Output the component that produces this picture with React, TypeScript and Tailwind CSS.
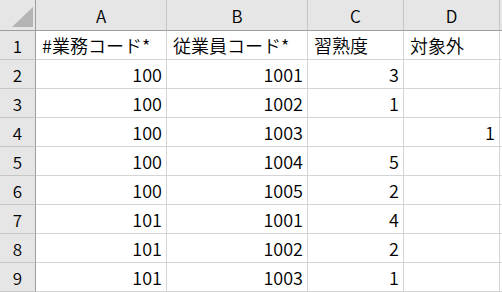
import React from 'react';

const rows: (string | number)[][] = [
  ['#業務コード*', '従業員コード*', '習熟度', '対象外'],
  [100, 1001, 3, ''],
  [100, 1002, 1, ''],
  [100, 1003, '', 1],
  [100, 1004, 5, ''],
  [100, 1005, 2, ''],
  [101, 1001, 4, ''],
  [101, 1002, 2, ''],
  [101, 1003, 1, ''],
];

const cols = ['A', 'B', 'C', 'D'];

export default function App() {
  return (
    <div
      className="w-[502px] h-[292px] overflow-hidden bg-white text-black text-[18px] font-[350]"
      style={{ fontFamily: '"Noto Sans CJK JP", "Noto Sans", sans-serif' }}
    >
      <div className="grid grid-cols-[36px_131px_141px_96px_96px_40px] grid-rows-[31px_repeat(9,29px)]">
        {/* column headers */}
        <div className="relative bg-[#e6e6e6] border-r border-b border-[#9e9e9e]">
          <svg className="absolute left-[12px] top-[7px]" width="21" height="20" viewBox="0 0 21 20">
            <polygon points="0,20 21,20 21,0" fill="#b4b4b4" />
          </svg>
        </div>
        {cols.map((c) => (
          <div
            key={c}
            className="bg-[#e6e6e6] border-r border-r-[#c6c6c6] border-b border-b-[#9e9e9e] flex items-center justify-center leading-none pt-[1px] text-[17px]"
          >
            {c}
          </div>
        ))}
        <div className="bg-[#e6e6e6] border-b border-[#9e9e9e]" />

        {rows.map((r, i) => (
          <React.Fragment key={i}>
            <div className="bg-[#e6e6e6] border-r border-r-[#9e9e9e] border-b border-b-[#c6c6c6] flex items-center justify-center leading-none text-[17px]">
              {i + 1}
            </div>
            {r.map((v, j) => (
              <div
                key={j}
                className={
                  'border-r border-b border-[#d4d4d4] flex items-center leading-none whitespace-nowrap overflow-hidden ' +
                  (i === 0 ? 'justify-start pl-[6px]' : 'justify-end pr-[4px]')
                }
              >
                {v}
              </div>
            ))}
            <div className="border-b border-[#d4d4d4]" />
          </React.Fragment>
        ))}
      </div>
    </div>
  );
}
